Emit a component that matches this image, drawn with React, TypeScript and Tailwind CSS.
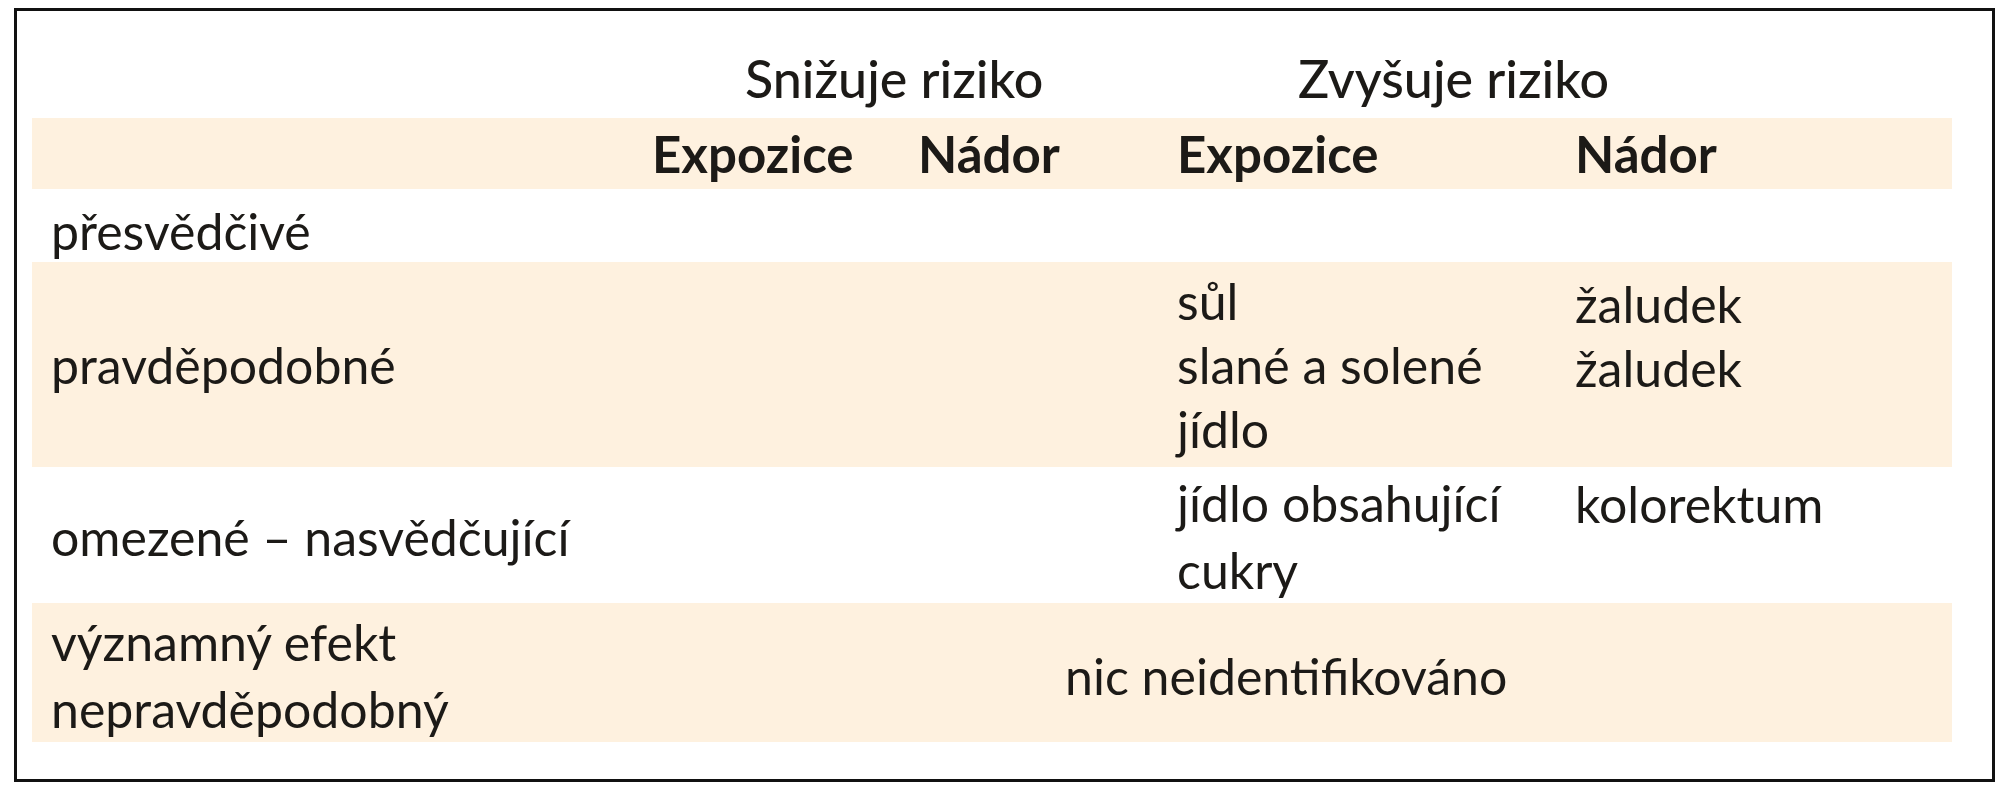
import React from "react";

const font = { fontFamily: "Lato, 'Open Sans', sans-serif" };

export default function App() {
  return (
    <div className="w-[2005px] h-[800px] bg-white pt-[8px] pl-[14px]" style={font}>
      <div className="w-[1981px] h-[774px] border-[3px] border-[#111] text-[#1c1a17]">
        {/* header row 1 */}
        <div className="ml-[15px] mr-[40px] h-[107px] grid grid-cols-[620px_525px_775px] items-end pb-[10px] text-[52px] leading-[60px] font-medium">
          <div />
          <div className="pl-[93px]">Snižuje riziko</div>
          <div className="pl-[121px]">Zvyšuje riziko</div>
        </div>
        {/* header row 2 */}
        <div className="ml-[15px] mr-[40px] h-[71px] bg-[#fef1df] grid grid-cols-[620px_266px_259px_398px_377px] items-center font-bold text-[51px] leading-[60px]">
          <div />
          <div>Expozice</div>
          <div>Nádor</div>
          <div>Expozice</div>
          <div>Nádor</div>
        </div>
        {/* přesvědčivé */}
        <div className="ml-[15px] mr-[40px] h-[73px] grid grid-cols-[620px_266px_259px_398px_377px] items-center text-[50px] leading-[64px] pt-[10px]">
          <div className="pl-[19px]">přesvědčivé</div>
        </div>
        {/* pravděpodobné */}
        <div className="ml-[15px] mr-[40px] h-[205px] bg-[#fef1df] grid grid-cols-[620px_266px_259px_398px_377px] items-center text-[50px] leading-[64px]">
          <div className="pl-[19px]">pravděpodobné</div>
          <div />
          <div />
          <div className="flex flex-col">
            <span>sůl</span>
            <span>slané a solené</span>
            <span>jídlo</span>
          </div>
          <div className="flex flex-col self-start pt-[10px]">
            <span>žaludek</span>
            <span>žaludek</span>
          </div>
        </div>
        {/* omezené */}
        <div className="ml-[15px] mr-[40px] h-[136px] grid grid-cols-[620px_266px_259px_398px_377px] items-center text-[50px] leading-[67px] pt-[3px]">
          <div className="pl-[19px]">omezené – nasvědčující</div>
          <div />
          <div />
          <div className="flex flex-col">
            <span>jídlo obsahující</span>
            <span>cukry</span>
          </div>
          <div className="self-start pt-[1px]">kolorektum</div>
        </div>
        {/* významný efekt */}
        <div className="ml-[15px] mr-[40px] h-[139px] bg-[#fef1df] grid grid-cols-[620px_1300px] items-center text-[50px] leading-[67px] pt-[6px]">
          <div className="pl-[19px] flex flex-col">
            <span>významný efekt</span>
            <span>nepravděpodobný</span>
          </div>
          <div className="pl-[413px]">nic neidentifikováno</div>
        </div>
      </div>
    </div>
  );
}
